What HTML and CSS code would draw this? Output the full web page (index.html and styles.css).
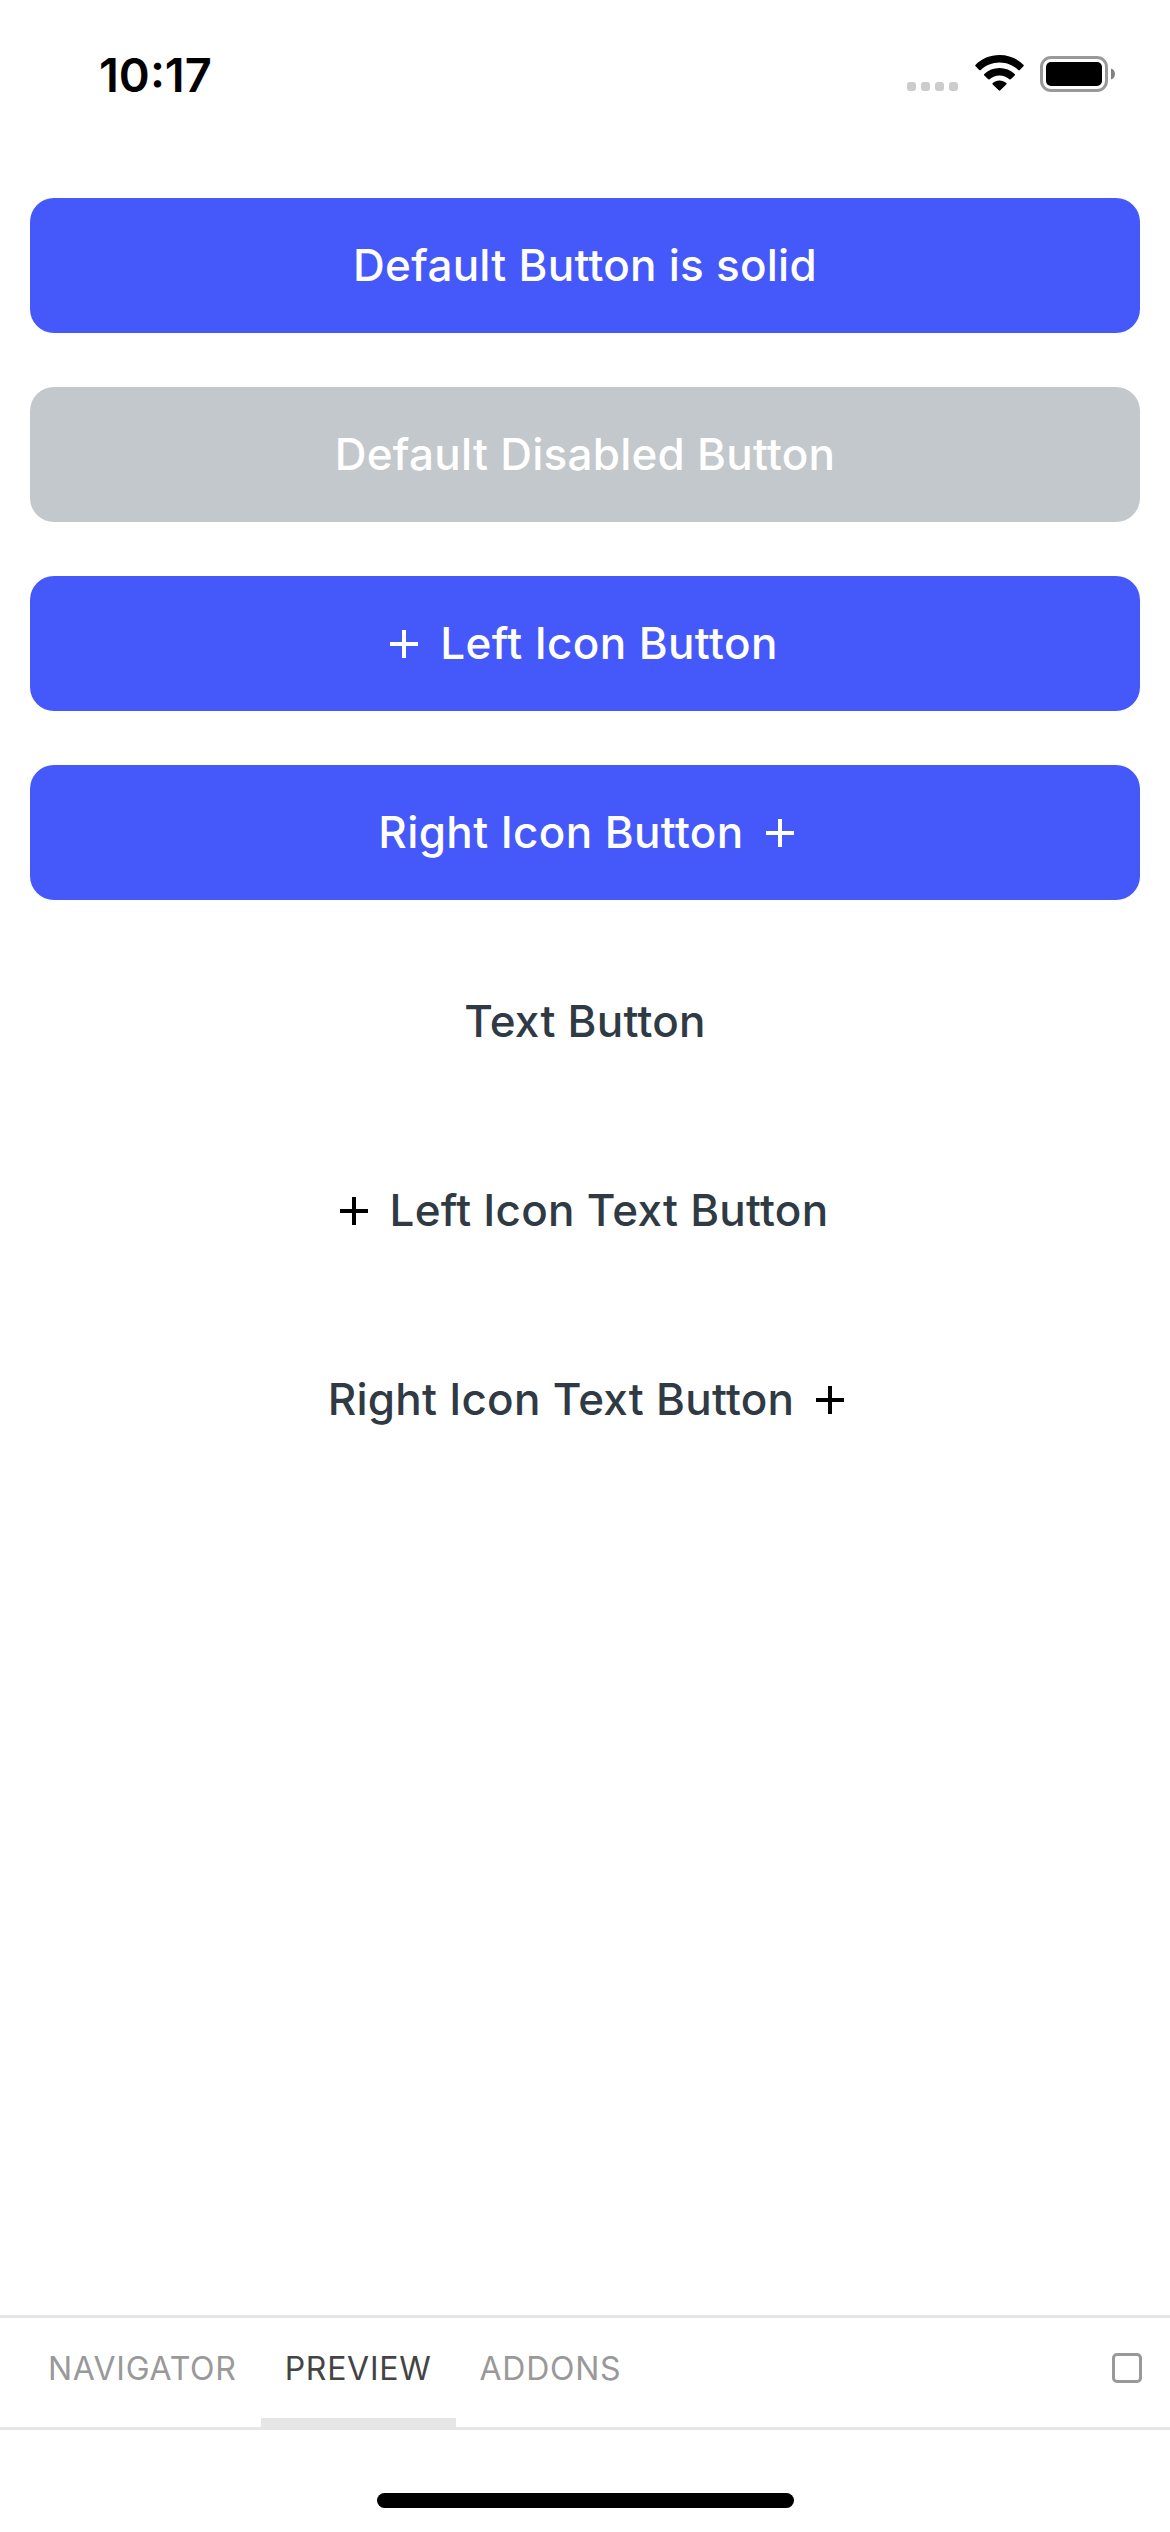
FILE: index.html
```html
<!DOCTYPE html>
<html lang="en">
<head>
<meta charset="utf-8">
<title>Buttons</title>
<link rel="stylesheet" href="styles.css">
</head>
<body>
<div class="screen">
  <header class="status">
    <span class="time">10:17</span>
    <div class="indicators">
      <svg class="signal" viewBox="0 0 51 9"><rect width="9" height="9" rx="3"/><rect x="14" width="9" height="9" rx="3"/><rect x="28" width="9" height="9" rx="3"/><rect x="42" width="9" height="9" rx="3"/></svg>
      <svg class="wifi" viewBox="0 0 49 36"><path d="M24.5 0C34 0 42.300 3.700 48.400 9.700Q49.200 10.500 48.400 11.300L44.800 14.900Q44 15.700 43.200 14.900C38.200 10.300 31.800 7.500 24.500 7.500S10.800 10.300 5.800 14.900Q5 15.700 4.200 14.900L.6 11.300Q-.2 10.500 .6 9.700C6.700 3.700 15 0 24.500 0Z"/><path d="M24.500 13C30.500 13 35.800 15.200 39.700 18.900Q40.500 19.700 39.700 20.500L36 24.100Q35.200 24.900 34.400 24.200C31.700 21.900 28.300 20.500 24.500 20.500S17.300 21.900 14.600 24.200Q13.800 24.900 13 24.100L9.300 20.500Q8.500 19.700 9.300 18.900C13.200 15.200 18.500 13 24.500 13Z"/><path d="M24.500 25.500C27.200 25.500 29.500 26.400 31.200 27.900Q32 28.600 31.200 29.400L25.300 35.300Q24.500 36.100 23.700 35.300L17.800 29.400Q17 28.600 17.800 27.900C19.500 26.400 21.800 25.500 24.500 25.500Z"/></svg>
      <svg class="battery" viewBox="0 0 75 36"><rect class="battery-frame" x="1.500" y="1.500" width="65" height="33" rx="9.500"/><rect x="6" y="6" width="56" height="24" rx="5"/><path class="battery-cap" d="M71 12.500C73.500 13.300 75 15.500 75 18S73.500 22.700 71 23.500Z"/></svg>
    </div>
  </header>
  <main class="buttons">
    <button class="btn solid"><span class="label">Default Button is solid</span></button>
    <button class="btn solid" disabled><span class="label">Default Disabled Button</span></button>
    <button class="btn solid"><svg class="plus" viewBox="0 0 24 24"><path d="M19 13h-6v6h-2v-6H5v-2h6V5h2v6h6z"/></svg><span class="label wide">Left Icon Button</span></button>
    <button class="btn solid"><span class="label wide">Right Icon Button</span><svg class="plus" viewBox="0 0 24 24"><path d="M19 13h-6v6h-2v-6H5v-2h6V5h2v6h6z"/></svg></button>
    <button class="btn text"><span class="label">Text Button</span></button>
    <button class="btn text"><svg class="plus" viewBox="0 0 24 24"><path d="M19 13h-6v6h-2v-6H5v-2h6V5h2v6h6z"/></svg><span class="label">Left Icon Text Button</span></button>
    <button class="btn text"><span class="label">Right Icon Text Button</span><svg class="plus" viewBox="0 0 24 24"><path d="M19 13h-6v6h-2v-6H5v-2h6V5h2v6h6z"/></svg></button>
  </main>
  <nav class="tabs">
    <button class="tab"><span>NAVIGATOR</span></button>
    <button class="tab active"><span>PREVIEW</span></button>
    <button class="tab"><span>ADDONS</span></button>
    <span class="toggle"></span>
  </nav>
  <footer class="home"><div class="home-bar"></div></footer>
</div>
</body>
</html>
```
FILE: styles.css
```css
* { box-sizing: border-box; }
body {
  margin: 0;
  background: #fff;
  font-family: Inter, "Liberation Sans", sans-serif;
}
.screen {
  display: flex;
  flex-direction: column;
  width: 1170px;
  height: 2532px;
}
button {
  margin: 0;
  border: 0;
  background: none;
  font-family: inherit;
}
.status {
  display: flex;
  justify-content: space-between;
  height: 198px;
  padding: 55px 55px 0 99px;
}
.time {
  height: 38px;
  font-size: 47px;
  font-weight: 600;
  line-height: 39px;
}
.indicators {
  display: flex;
  align-items: flex-end;
  height: 36px;
}
.signal { width: 51px; height: 9px; margin-right: 17px; fill: #ccc; }
.wifi { width: 49px; height: 36px; margin-right: 16px; }
.battery { width: 75px; height: 36px; margin-bottom: -1px; }
.battery-frame { fill: none; stroke: #999; stroke-width: 3; }
.battery-cap { fill: #808080; }
.buttons {
  display: flex;
  flex-direction: column;
  gap: 54px;
  padding: 0 30px;
}
.btn {
  display: flex;
  align-items: center;
  justify-content: center;
  height: 135px;
  padding: 0;
  border-radius: 24px;
  font-size: 44px;
  font-weight: 450;
}
.solid { background: #4558fa; color: #fff; }
.solid:disabled { background: #c3c8cc; }
.text { color: #2f3a44; }
.label {
  margin: 0 12px;
  padding-bottom: 2px;
  letter-spacing: 0.25px;
  white-space: nowrap;
}
.wide { letter-spacing: 0.38px; }
.plus { width: 48px; height: 48px; fill: #fff; }
.text .plus { fill: #000; }
.tabs {
  display: flex;
  height: 115px;
  margin-top: auto;
  padding: 0 28px 0 24px;
  border-top: 3px solid #e6e6e6;
  border-bottom: 3px solid #e6e6e6;
}
.tab {
  padding: 0 24px 9px;
  color: #999;
  font-size: 32px;
  letter-spacing: 0.74px;
}
.active {
  padding-bottom: 0;
  border-bottom: 9px solid #e6e6e6;
  color: #444;
}
.toggle {
  width: 30px;
  height: 30px;
  margin: 35px 0 0 auto;
  border: 3px solid #999;
  border-radius: 5px;
}
.home { height: 102px; padding-top: 63px; }
.home-bar {
  width: 417px;
  height: 15px;
  margin: 0 auto;
  border-radius: 8px;
  background: #000;
}
```
